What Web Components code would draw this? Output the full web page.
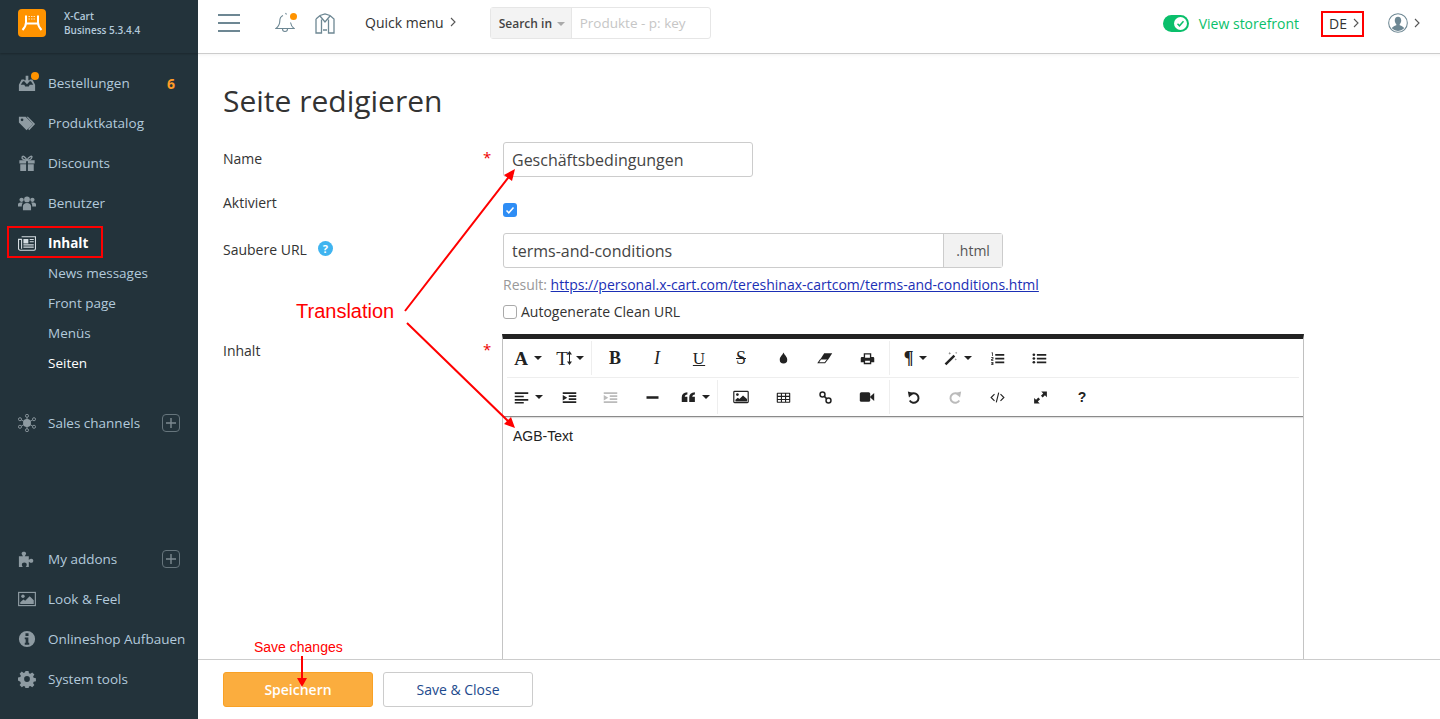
<!DOCTYPE html>
<html lang="de">
<head>
<meta charset="utf-8">
<title>Seite redigieren</title>
<style>
  html, body { margin: 0; height: 100%; overflow: hidden; }
  body { font-family: "Open Sans", sans-serif; font-size: 14px; color: #333; }
</style>
</head>
<body>
<x-app>
  <x-sidebar slot="side"></x-sidebar>
  <x-topbar slot="top"></x-topbar>
  <x-page slot="main" heading="Seite redigieren">
    <x-row label="Name" required>
      <x-input value="Geschäftsbedingungen" style="width:250px"></x-input>
    </x-row>
    <x-row label="Aktiviert" style="margin-top:16px;--label-top:0">
      <x-check checked style="margin-top:10px"></x-check>
    </x-row>
    <x-row label="Saubere URL" help style="margin-top:16px">
      <x-input value="terms-and-conditions" addon=".html" style="width:500px"></x-input>
      <x-url-result></x-url-result>
    </x-row>
    <x-row label="Inhalt" required style="margin-top:12px">
      <x-editor>AGB-Text</x-editor>
    </x-row>
  </x-page>
  <x-footer slot="foot"></x-footer>
</x-app>
<x-notes></x-notes>

<script>
// shared icon set, all drawn on a 20x20 box unless noted
const ICONS = {
  orders: '<path d="M4 6h3v2H5.6L3 12h4l1 2h4l1-2h4l-2.6-4H13V6h3l3 6v7H1v-7z"/><path d="M8.5 2h3v5H14l-4 4.5L6 7h2.5z"/>',
  tags: '<path fill-rule="evenodd" d="M1 3h7.5l8 8-7 7-8.500-8.500zM4.500 5a1.500 1.500 0 1 0 0 3 1.500 1.500 0 0 0 0-3z"/><path d="M11 3l8 8-6.500 7-1.300-1.300L16.500 11 9.500 3z"/>',
  gift: '<path d="M1.500 7h7.500v3.500H1.500zM11 7h7.500v3.500H11zM2.500 11.500H9V19H2.500zM11 11.500h6.500V19H11z"/><path fill="none" stroke="currentColor" stroke-width="1.500" d="M10 7C8 2.500 5 1.500 4.500 3.500S7 7 10 7s5-1.500 5.500-3.500S12 2.500 10 7z"/>',
  users: '<circle cx="10" cy="6" r="3.200"/><circle cx="4" cy="6.500" r="2.400"/><circle cx="16" cy="6.500" r="2.400"/><path d="M5.500 18v-4.500c0-2 2-3.500 4.500-3.500s4.500 1.500 4.500 3.500V18zM0 14v-2.500C0 10 1.500 9.500 4 9.500c.6 0 1 .1 1.400.2-.8.900-1.200 2-1.200 3.300V14zM20 14v-2.500c0-1.500-1.500-2-4-2-.6 0-1 .1-1.400.2.800.900 1.200 2 1.200 3.300V14z"/>',
  news: '<path fill="none" stroke="currentColor" stroke-width="1.200" d="M4 3h15.400v13.500a1.500 1.500 0 0 1-1.500 1.500H2.500A1.900 1.900 0 0 1 .6 16V6H4v10.500"/><path d="M6 5.500h5.500V10.500H6zM13 5.500h4.500v1.300H13zM13 8h4.500v1.300H13zM6 11.500h11.500v1.300H6zM6 14h11.500v1.300H6z"/>',
  channels: '<circle cx="10" cy="10" r="4.400"/><g fill="none" stroke="currentColor" stroke-width="1"><circle cx="10" cy="2" r="1.700"/><circle cx="10" cy="18" r="1.700"/><circle cx="2.200" cy="5.800" r="1.700"/><circle cx="17.800" cy="5.800" r="1.700"/><circle cx="2.200" cy="14.200" r="1.700"/><circle cx="17.800" cy="14.200" r="1.700"/><path d="M10 3.700v12.600M3.700 6.600l12.600 6.800M16.300 6.600L3.700 13.400"/></g>',
  puzzle: '<path d="M1 7h4.500C4.500 5.500 4 4.800 4 4c0-1.300 1.100-2 2.500-2S9 2.700 9 4c0 .8-.5 1.500-1.500 3H12v4c1.400-1 2-1.300 2.800-1.300 1.300 0 2.200 1 2.200 2.300s-.9 2.300-2.200 2.300c-.8 0-1.400-.3-2.800-1.300V19H8.500c.9-1.300 1.200-2 1.200-2.700C9.700 15 8.600 14 7 14s-2.700 1-2.700 2.300c0 .7.300 1.400 1.200 2.700H1z"/>',
  image: '<rect x=".7" y="2.700" width="18.600" height="14.600" fill="none" stroke="currentColor" stroke-width="1.300"/><circle cx="5.500" cy="7" r="1.900"/><path d="M2.500 15.500v-2L6 10.500l2 1.500 5-5 4.500 4.500v4z"/>',
  info: '<path fill-rule="evenodd" d="M10 1a9 9 0 1 1 0 18 9 9 0 0 1 0-18zM8.300 3.700v3h3.400v-3zM7.500 8.300v2h1v4h-1v2h5v-2h-1V8.300z"/>',
  gear: '<path fill-rule="evenodd" d="M8.300 1h3.400l.5 2.500 1.500.6 2.100-1.400 2.400 2.400-1.400 2.100.6 1.500 2.500.5v3.400l-2.500.5-.6 1.500 1.400 2.100-2.400 2.400-2.100-1.400-1.500.6-.5 2.500H8.300l-.5-2.500-1.500-.6-2.100 1.400-2.400-2.400 1.400-2.100-.6-1.500L0 11.700V8.300l2.600-.5.6-1.500-1.400-2.100 2.400-2.400 2.100 1.400 1.500-.6zM10 6.800a3.200 3.200 0 1 0 0 6.400 3.200 3.200 0 0 0 0-6.400z"/>',
  // editor toolbar
  drop: '<path d="M10 2c1 3 5 5.500 5 9.500a5 5 0 0 1-10 0C5 7.500 9 5 10 2z"/>',
  eraser: '<path d="M9 4h10l-5 8H4z"/><path fill="none" stroke="currentColor" stroke-width="1.300" d="M4.500 11.500L1.500 16h8.300l3.500-4.500"/>',
  print: '<path fill-rule="evenodd" d="M5 3h10v5h2.500A1.500 1.500 0 0 1 19 9.500V15h-4v2.500H5V15H1V9.500A1.500 1.500 0 0 1 2.500 8H5zM6.800 4.800V9h6.400V4.800zM6.800 13v2.800h6.400V13z"/>',
  wand: '<path d="M14 5l2.300 2.300L4.500 19l-2.300-2.300z"/><path fill-opacity=".55" d="M9 1l.7 1.500L11 3l-1.300.6L9 5l-.7-1.400L7 3l1.300-.5zM17 9.500l.5 1 1 .5-1 .5-.5 1-.5-1-1-.5 1-.5zM17.500 1l.5 1.100 1 .4-1 .5-.5 1-.4-1-1.100-.5 1.100-.4z"/>',
  ol: '<path d="M7 4h12v2.400H7zM7 9h12v2.400H7zM7 14h12v2.400H7z"/><path d="M2 2h2v4.500H3V3H2zM1.500 8h3v3l-2 1h2v1h-3v-2l2-1v-1h-2zM1.500 14.500h3v4h-3v-1h2v-.5h-1.500v-1h1.500v-.5h-2z"/>',
  ul: '<path d="M6.500 4h12.500v2.400H6.500zM6.500 9h12.500v2.400H6.500zM6.500 14h12.500v2.400H6.500z"/><circle cx="2.500" cy="5" r="1.800"/><circle cx="2.500" cy="10" r="1.800"/><circle cx="2.500" cy="15" r="1.800"/>',
  align: '<path d="M1 3h18v2.200H1zM1 7.500h12v2.200H1zM1 12h18v2.200H1zM1 16h12v2H1z"/>',
  indent: '<path d="M1 3h18v2.400H1zM9 7h10v2.400H9zM9 11h10v2.400H9zM1 15h18v2.400H1zM1 6.500l6 3.700-6 3.800z"/>',
  minus: '<path d="M2 8.300h16v3.400H2z"/>',
  quote: '<path d="M1 16V9.500C1 6 3.500 3.500 8.500 3v3C6.300 6.400 5 7.300 5 9h3.500v7zM11 16V9.500C11 6 13.500 3.500 18.500 3v3c-2.200.4-3.500 1.300-3.500 3h3.500v7z"/>',
  picture: '<rect x="1" y="3" width="18" height="14" rx="1" fill="none" stroke="currentColor" stroke-width="1.500"/><circle cx="5.500" cy="7" r="1.700"/><path d="M3 15.500v-2l3-2.500 2 1.500 4.500-4.500 5 4.500v3z"/>',
  table: '<path fill-rule="evenodd" d="M2 3.500h16a1 1 0 0 1 1 1V16a1 1 0 0 1-1 1H2a1 1 0 0 1-1-1V4.500a1 1 0 0 1 1-1zM2.500 5v2.800h4V5zM8 5v2.800h4V5zM13.500 5v2.800h4V5zM2.500 9.200V12h4V9.200zM8 9.200V12h4V9.200zM13.500 9.200V12h4V9.200zM2.500 13.300v2.300h4v-2.300zM8 13.300v2.300h4v-2.300zM13.500 13.300v2.300h4v-2.300z"/>',
  link: '<g fill="none" stroke="currentColor" stroke-width="2"><circle cx="6" cy="6" r="3.300"/><circle cx="14" cy="14" r="3.300"/><path d="M8.500 8.500l3 3"/></g>',
  video: '<rect x="1" y="4" width="13" height="12" rx="2"/><path d="M14 9.500l5-4.500v10l-5-4.500z"/>',
  undo: '<path fill="none" stroke="currentColor" stroke-width="2.600" d="M5.500 6.800A6.300 6.300 0 1 1 5 14"/><path d="M2.500 2l7.500 2-6 6z"/>',
  redo: '<path fill="none" stroke="currentColor" stroke-width="2.600" d="M14.500 6.800A6.300 6.300 0 1 0 15 14"/><path d="M17.500 2l-7.500 2 6 6z"/>',
  code: '<path fill="none" stroke="currentColor" stroke-width="1.500" d="M6 5.500L1.500 10 6 14.500M14 5.500l4.500 4.500-4.500 4.500M11.600 3.500l-3.200 13"/>',
  expand: '<path d="M11 2h7.500v7.500l-2.600-2.600-3 3-2.300-2.300 3-3zM9 18H1.500v-7.500l2.600 2.600 3-3 2.300 2.300-3 3z"/>'
};

function chevron(color = "#555") {
  return `<svg width="6" height="10" viewBox="0 0 6 10" fill="none" stroke="${color}" stroke-width="1.100"><path d="M1 1l4 4-4 4"/></svg>`;
}

class XIcon extends HTMLElement {
  connectedCallback() {
    const size = this.getAttribute("size") || 20;
    this.attachShadow({ mode: "open" }).innerHTML = `
      <style>:host { display: inline-flex; width: ${size}px; height: ${size}px; } svg { display: block; }</style>
      <svg width="${size}" height="${size}" viewBox="0 0 20 20" fill="currentColor">${ICONS[this.getAttribute("name")] || ""}</svg>`;
  }
}
customElements.define("x-icon", XIcon);

class XApp extends HTMLElement {
  constructor() {
    super();
    this.attachShadow({ mode: "open" }).innerHTML = `
      <style>
        :host { display: grid; grid-template-columns: 198px 1fr; grid-template-rows: 54px 1fr 60px; height: 719px; overflow: hidden; background: #fff; }
        ::slotted([slot=side]) { grid-row: 1 / 4; }
        ::slotted([slot=main]) { min-height: 0; overflow: hidden; }
      </style>
      <slot name="side"></slot><slot name="top"></slot><slot name="main"></slot><slot name="foot"></slot>`;
  }
}
customElements.define("x-app", XApp);

class XNavItem extends HTMLElement {
  connectedCallback() {
    const a = (n) => this.getAttribute(n);
    this.attachShadow({ mode: "open" }).innerHTML = `
      <style>
        :host { display: flex; align-items: center; height: 40px; padding-left: 18px; color: #b3cadb; font-size: 13.500px; position: relative; }
        :host([sub]) { height: 30px; padding-left: 48px; }
        :host([active]) { color: #fff; }
        :host([strong]) { font-weight: 700; }
        .ic { width: 18px; height: 18px; margin-right: 12px; color: #8e9ba2; display: flex; }
        .dot { position: absolute; left: 31px; top: 9px; width: 8px; height: 8px; border-radius: 50%; background: #ff9300; }
        .badge { position: absolute; left: 167px; color: #ff9c27; font-weight: 700; font-size: 14px; }
        .plus { position: absolute; left: 162px; top: 11px; width: 16px; height: 16px; border: 1px solid #66757c; border-radius: 4px; color: #7d8a91; display: flex; align-items: center; justify-content: center; }
        :host([strong]) .ic { color: #d5dde2; }
      </style>
      ${a("icon") ? `<span class="ic"><x-icon name="${a("icon")}" size="18"></x-icon></span>` : ""}
      ${this.hasAttribute("dot") ? `<span class="dot"></span>` : ""}
      <slot></slot>
      ${a("badge") ? `<span class="badge">${a("badge")}</span>` : ""}
      ${this.hasAttribute("plus") ? `<span class="plus"><svg width="10" height="10" viewBox="0 0 10 10" stroke="currentColor" stroke-width="1.400"><path d="M5 0v10M0 5h10"/></svg></span>` : ""}`;
  }
}
customElements.define("x-nav-item", XNavItem);

class XSidebar extends HTMLElement {
  constructor() {
    super();
    this.attachShadow({ mode: "open" }).innerHTML = `
      <style>
        :host { display: flex; flex-direction: column; background: #23333b; height: 719px; }
        header { height: 53px; display: flex; align-items: center; padding: 0 0 8px 18px; box-sizing: border-box; box-shadow: 0 1px 2px rgba(0,0,0,.25); gap: 18px; }
        .logo { width: 28px; height: 28px; display: block; }
        .brand { font-size: 10px; line-height: 14px; font-weight: 600; color: #b3cadb; margin-top: 1px; }
        nav { flex: 1; display: flex; flex-direction: column; padding: 10px 0 20px; }
        .gap { height: 25px; }
        .subs { margin-top: -5px; display: flex; flex-direction: column; }
        .push { margin-top: auto; }
      </style>
      <header>
        <svg class="logo" viewBox="0 0 28 28" fill="none" stroke="#fff" stroke-width="2">
          <rect width="28" height="28" rx="4" fill="#ff9300" stroke="none"/>
          <path d="M8 6.500v7c0 3-1.200 5-3.500 7.500M20 6.500v7c0 3 1.200 5 3.500 7.500M8 14.500h12"/>
          <path stroke="#ffe2b8" stroke-width="1.200" stroke-dasharray="1.500 1" d="M10.500 7.500h7M10.500 10h7"/>
        </svg>
        <div class="brand">X-Cart<br>Business 5.3.4.4</div>
      </header>
      <nav>
        <x-nav-item icon="orders" dot badge="6">Bestellungen</x-nav-item>
        <x-nav-item icon="tags">Produktkatalog</x-nav-item>
        <x-nav-item icon="gift">Discounts</x-nav-item>
        <x-nav-item icon="users">Benutzer</x-nav-item>
        <x-nav-item icon="news" active strong>Inhalt</x-nav-item>
        <div class="subs">
          <x-nav-item sub>News messages</x-nav-item>
          <x-nav-item sub>Front page</x-nav-item>
          <x-nav-item sub>Menüs</x-nav-item>
          <x-nav-item sub active>Seiten</x-nav-item>
        </div>
        <div class="gap"></div>
        <x-nav-item icon="channels" plus>Sales channels</x-nav-item>
        <x-nav-item class="push" icon="puzzle" plus>My addons</x-nav-item>
        <x-nav-item icon="image">Look &amp; Feel</x-nav-item>
        <x-nav-item icon="info">Onlineshop Aufbauen</x-nav-item>
        <x-nav-item icon="gear">System tools</x-nav-item>
      </nav>`;
  }
}
customElements.define("x-sidebar", XSidebar);

class XTopbar extends HTMLElement {
  constructor() {
    super();
    this.attachShadow({ mode: "open" }).innerHTML = `
      <style>
        :host { display: flex; align-items: center; height: 53px; box-sizing: content-box; border-bottom: 1px solid #ccc; background: #fff; padding-left: 20px; color: #333; }
        .row { display: flex; align-items: center; flex: 1; height: 46px; margin-bottom: 7px; }
        .burger { width: 22px; display: flex; flex-direction: column; gap: 6px; margin-right: 35px; }
        .burger i { display: block; height: 2px; background: #6d8793; }
        .bell { position: relative; width: 20px; height: 22px; margin-right: 20px; }
        .store { margin-right: 30px; }
        .dot { position: absolute; right: -2px; top: 1px; width: 7px; height: 7px; border-radius: 50%; background: #ff9300; }
        .quick { margin-right: 34px; margin-bottom: 2px; display: flex; align-items: center; gap: 6px; font-size: 14px; }
        .search { display: flex; width: 221px; height: 32px; box-sizing: border-box; border: 1px solid #e6e6e6; border-radius: 3px; font-size: 12px; }
        .search b { display: flex; align-items: center; gap: 5px; width: 81px; padding-left: 8px; box-sizing: border-box; background: #f3f3f3; font-weight: 600; color: #444; border-right: 1px solid #e6e6e6; }
        .search b::after { content: ""; border: 4px solid transparent; border-top-color: #aaa; border-bottom: 0; margin-top: 2px; }
        .search span { padding: 0 8px; color: #c6c6c6; line-height: 30px; font-size: 13.500px; }
        .right { margin-left: auto; display: flex; align-items: center; }
        .toggle { width: 26px; height: 17px; border-radius: 9px; background: #0abf6b; display: flex; align-items: center; justify-content: flex-end; padding-right: 2px; box-sizing: border-box; margin-right: 10px; }
        .toggle svg { display: block; }
        .view { color: #0abf6b; font-size: 14px; margin-right: 30px; }
        .lang { display: flex; align-items: center; gap: 6px; font-size: 14px; margin-right: 29px; }
        .user { display: flex; align-items: center; gap: 6px; margin-right: 20px; }
      </style>
      <div class="row">
      <div class="burger"><i></i><i></i><i></i></div>
      <div class="bell">
        <svg width="20" height="22" viewBox="0 0 20 22" fill="none" stroke="#6d8793" stroke-width="1.100">
          <path d="M8 3.500C5.500 4.500 4.800 6.500 4.800 9c0 3.500-1.300 5.500-3.800 7.500h18c-2-1.500-3-3.500-3.500-6M7.500 17c0 1.500 1 2.500 2.500 2.500s2.500-1 2.500-2.500"/>
          <path d="M10.500 1l1 1.500"/>
        </svg>
        <span class="dot"></span>
      </div>
      <svg class="store" width="20" height="21" viewBox="0 0 20 21" fill="none" stroke="#6d8793" stroke-width="1.300">
        <path d="M1 6l4-3.500L10 1l5 1.500L19 6v14h-5.500V6.500M1 6v14h5.500V6.500M5 3l5 6 5-6M8 17h4"/>
      </svg>
      <div class="quick">Quick menu ${chevron()}</div>
      <div class="search"><b>Search in</b><span>Produkte - p: key</span></div>
      <div class="right">
        <span class="toggle"><svg width="13" height="13" viewBox="0 0 13 13"><circle cx="6.500" cy="6.500" r="6.500" fill="#fff"/><path d="M3.500 6.800l2 2 4-4.500" fill="none" stroke="#0abf6b" stroke-width="1.500"/></svg></span>
        <span class="view">View storefront</span>
        <span class="lang">DE ${chevron()}</span>
        <span class="user">
          <svg width="20" height="20" viewBox="0 0 21 21"><circle cx="10.500" cy="10.500" r="9.800" fill="#fff" stroke="#6d8793" stroke-width="1.100"/><path fill="#6d8793" d="M10.500 4c2.200 0 3.400 1.700 3.400 3.800 0 1.500-.7 3-1.600 3.800v1.200c2 .7 4 1.500 4.700 3.200a9 9 0 0 1-13 0c.7-1.700 2.700-2.500 4.700-3.200v-1.200C7.800 10.800 7.100 9.300 7.100 7.800 7.100 5.700 8.300 4 10.500 4z"/></svg>
          ${chevron()}
        </span>
      </div>
      </div>`;
  }
}
customElements.define("x-topbar", XTopbar);

class XPage extends HTMLElement {
  connectedCallback() {
    this.attachShadow({ mode: "open" }).innerHTML = `
      <style>
        :host { display: block; padding: 27px 25px 0; background: #fff; box-shadow: inset 0 4px 4px -4px rgba(0,0,0,.08); }
        h1 { margin: 0 0 21px; font-size: 30px; line-height: 40px; font-weight: 400; color: #333; }
      </style>
      <h1>${this.getAttribute("heading")}</h1>
      <slot></slot>`;
  }
}
customElements.define("x-page", XPage);

class XRow extends HTMLElement {
  connectedCallback() {
    this.attachShadow({ mode: "open" }).innerHTML = `
      <style>
        :host { display: grid; grid-template-columns: 280px 1fr; color: #333; }
        .label { position: relative; padding-top: var(--label-top, 7px); line-height: 20px; font-size: 14px; height: 20px; display: flex; align-items: center; gap: 11px; }
        .star { position: absolute; left: 260px; top: 5px; color: #e00; font-size: 15px; }
        .help { width: 15px; height: 15px; border-radius: 50%; background: #3fb4f0; color: #fff; font-size: 11px; font-weight: 700; line-height: 15px; text-align: center; margin-top: -3px; }
      </style>
      <div class="label">${this.getAttribute("label")}
        ${this.hasAttribute("help") ? `<span class="help">?</span>` : ""}
        ${this.hasAttribute("required") ? `<span class="star">*</span>` : ""}
      </div>
      <div><slot></slot></div>`;
  }
}
customElements.define("x-row", XRow);

class XInput extends HTMLElement {
  connectedCallback() {
    const addon = this.getAttribute("addon");
    this.attachShadow({ mode: "open" }).innerHTML = `
      <style>
        :host { display: flex; height: 35px; box-sizing: border-box; border: 1px solid #ccc; border-radius: 3px; font-size: 16px; color: #444; }
        .v { flex: 1; padding-left: 8px; line-height: 35px; }
        .add { width: 59px; box-sizing: border-box; background: #f2f2f2; border-left: 1px solid #ccc; text-align: center; font-size: 14px; line-height: 33px; color: #555; }
      </style>
      <div class="v">${this.getAttribute("value")}</div>
      ${addon ? `<div class="add">${addon}</div>` : ""}`;
  }
}
customElements.define("x-input", XInput);

class XCheck extends HTMLElement {
  connectedCallback() {
    const on = this.hasAttribute("checked");
    this.attachShadow({ mode: "open" }).innerHTML = `
      <style>
        :host { display: flex; align-items: center; }
        .b { width: 14px; height: 14px; box-sizing: border-box; border-radius: 3px; display: block; }
        .on { background: #2e8df5; }
        .off { border: 1px solid #aaa; background: #fff; }
        .t { margin-left: 4px; font-size: 14px; color: #333; line-height: 20px; }
      </style>
      ${on
        ? `<svg class="b on" viewBox="0 0 14 14"><path d="M3.500 7.500l2.300 2.300 4.700-5.300" fill="none" stroke="#fff" stroke-width="1.500"/></svg>`
        : `<span class="b off"></span>`}
      <span class="t"><slot></slot></span>`;
  }
}
customElements.define("x-check", XCheck);

class XUrlResult extends HTMLElement {
  constructor() {
    super();
    this.attachShadow({ mode: "open" }).innerHTML = `
      <style>
        :host { display: block; }
        .r { margin-top: 7px; line-height: 20px; font-size: 14px; color: #999; }
        a { color: #1b2fb5; }
        .c { margin-top: 7px; height: 20px; }
      </style>
      <div class="r">Result: <a href="#">https://personal.x-cart.com/tereshinax-cartcom/terms-and-conditions.html</a></div>
      <div class="c"><x-check>Autogenerate Clean URL</x-check></div>`;
  }
}
customElements.define("x-url-result", XUrlResult);

class XTool extends HTMLElement {
  connectedCallback() {
    const a = (n) => this.getAttribute(n);
    const glyph = a("glyph");
    this.attachShadow({ mode: "open" }).innerHTML = `
      <style>
        :host { display: flex; align-items: center; justify-content: center; gap: 6px; width: ${a("w") || 42}px; height: 38px; color: #222; }
        :host([off]) { color: #bbb; }
        .g { font: 700 ${a("fs") || 15}px/1 ${a("sans") !== null ? '"Liberation Sans"' : '"Liberation Serif"'}, serif; }
        .i { font-style: italic; font-weight: 400; }
        .u { text-decoration: underline; font-weight: 400; }
        .s { text-decoration: line-through; font-weight: 400; }
        .n { font-weight: 400; }
        .caret { border: 4px solid transparent; border-top: 4px solid #222; border-bottom: 0; }
      </style>
      ${glyph ? `<span class="g ${a("cls") || ""}">${glyph}</span>` : ""}
      ${a("extra") === "updown" ? `<svg width="5" height="14" viewBox="0 0 5 14" style="margin:0 -2px 0 -7px"><path fill="#222" d="M2 3h1v8H2zM2.500 0L5 3.500H0zM2.500 14L0 10.500h5z"/></svg>` : ""}
      ${a("icon") ? `<x-icon name="${a("icon")}" size="${a("size") || 16}"></x-icon>` : ""}
      ${this.hasAttribute("caret") ? `<span class="caret"></span>` : ""}`;
  }
}
customElements.define("x-tool", XTool);

class XEditor extends HTMLElement {
  constructor() {
    super();
    this.attachShadow({ mode: "open" }).innerHTML = `
      <style>
        :host { display: block; width: 802px; margin-left: -1px; height: 420px; box-sizing: border-box; border: 1px solid #c4c4c4; border-top: 5px solid #222; }
        .bar { padding: 0 4px; border-bottom: 1px solid #8a8a8a; box-shadow: 0 1px 1px rgba(0,0,0,.12); }
        .line { display: flex; height: 38px; }
        .line + .line { border-top: 1px solid #eee; }
        .sep { width: 1px; background: #eee; margin: 2px 2px 2px 0; flex: none; }
        .body { padding: 9px 10px; font: 14px/20px "Liberation Sans", sans-serif; color: #222; }
      </style>
      <div class="bar">
        <div class="line">
          <x-tool glyph="A" fs="19" caret></x-tool>
          <x-tool glyph="T" fs="19" cls="n" extra="updown" caret></x-tool>
          <span class="sep"></span>
          <x-tool glyph="B" fs="18"></x-tool>
          <x-tool glyph="I" fs="18" cls="i"></x-tool>
          <x-tool glyph="U" fs="17" cls="u"></x-tool>
          <x-tool glyph="S" fs="18" cls="s"></x-tool>
          <x-tool icon="drop" size="15"></x-tool>
          <x-tool icon="eraser" size="16"></x-tool>
          <x-tool icon="print" size="15"></x-tool>
          <span class="sep" style="margin-left:1px"></span>
          <x-tool glyph="¶" fs="18" w="47" caret></x-tool>
          <x-tool icon="wand" size="15" w="37" caret></x-tool>
          <x-tool icon="ol" size="15" w="42"></x-tool>
          <x-tool icon="ul" size="15"></x-tool>
        </div>
        <div class="line">
          <x-tool icon="align" size="15" caret></x-tool>
          <x-tool icon="indent" size="15" w="40"></x-tool>
          <x-tool icon="indent" size="15" off></x-tool>
          <x-tool icon="minus" size="15"></x-tool>
          <x-tool icon="quote" size="15" w="44" caret></x-tool>
          <span class="sep"></span>
          <x-tool icon="picture" size="16"></x-tool>
          <x-tool icon="table" size="15"></x-tool>
          <x-tool icon="link" size="15"></x-tool>
          <x-tool icon="video" size="16"></x-tool>
          <span class="sep" style="margin-left:1px;margin-right:2px"></span>
          <x-tool icon="undo" size="15"></x-tool>
          <x-tool icon="redo" size="15" off></x-tool>
          <x-tool icon="code" size="15" w="43"></x-tool>
          <x-tool icon="expand" size="15"></x-tool>
          <x-tool glyph="?" fs="14" sans></x-tool>
        </div>
      </div>
      <div class="body"><slot></slot></div>`;
  }
}
customElements.define("x-editor", XEditor);

class XFooter extends HTMLElement {
  constructor() {
    super();
    this.attachShadow({ mode: "open" }).innerHTML = `
      <style>
        :host { display: flex; gap: 10px; padding: 12px 25px; border-top: 1px solid #ccc; background: #fff; box-sizing: border-box; height: 60px; }
        button { width: 150px; height: 35px; border-radius: 3px; font: 14px "Open Sans", sans-serif; padding: 0; }
        .main { background: #fbad3e; border: 1px solid #f9a125; color: #fff; font-weight: 600; }
        .alt { background: #fff; border: 1px solid #ccc; color: #1d4a8d; }
      </style>
      <button class="main">Speichern</button>
      <button class="alt">Save &amp; Close</button>`;
  }
}
customElements.define("x-footer", XFooter);

// the red marks someone drew on the screenshot lie over everything
class XNotes extends HTMLElement {
  constructor() {
    super();
    this.attachShadow({ mode: "open" }).innerHTML = `
      <style>
        :host { position: absolute; left: 0; top: 0; width: 1440px; height: 719px; pointer-events: none; }
        svg { display: block; }
        text { font-family: "Liberation Sans", Arial, sans-serif; fill: #f00; }
      </style>
      <svg width="1440" height="719" fill="none" stroke="#f00" stroke-width="2">
        <rect x="8" y="227" width="94" height="30"/>
        <rect x="1322" y="12" width="41" height="24"/>
        <path d="M405 311L511 174M407 323L510 423M302 656V680"/>
        <path fill="#f00" stroke="none" d="M515 169l-3 12-8-6zM515 428l-11-4 7-7zM302 687l-5-9h10z"/>
        <text x="296" y="318" font-size="20" stroke="none">Translation</text>
        <text x="254" y="652" font-size="14" stroke="none">Save changes</text>
      </svg>`;
  }
}
customElements.define("x-notes", XNotes);
</script>
</body>
</html>
